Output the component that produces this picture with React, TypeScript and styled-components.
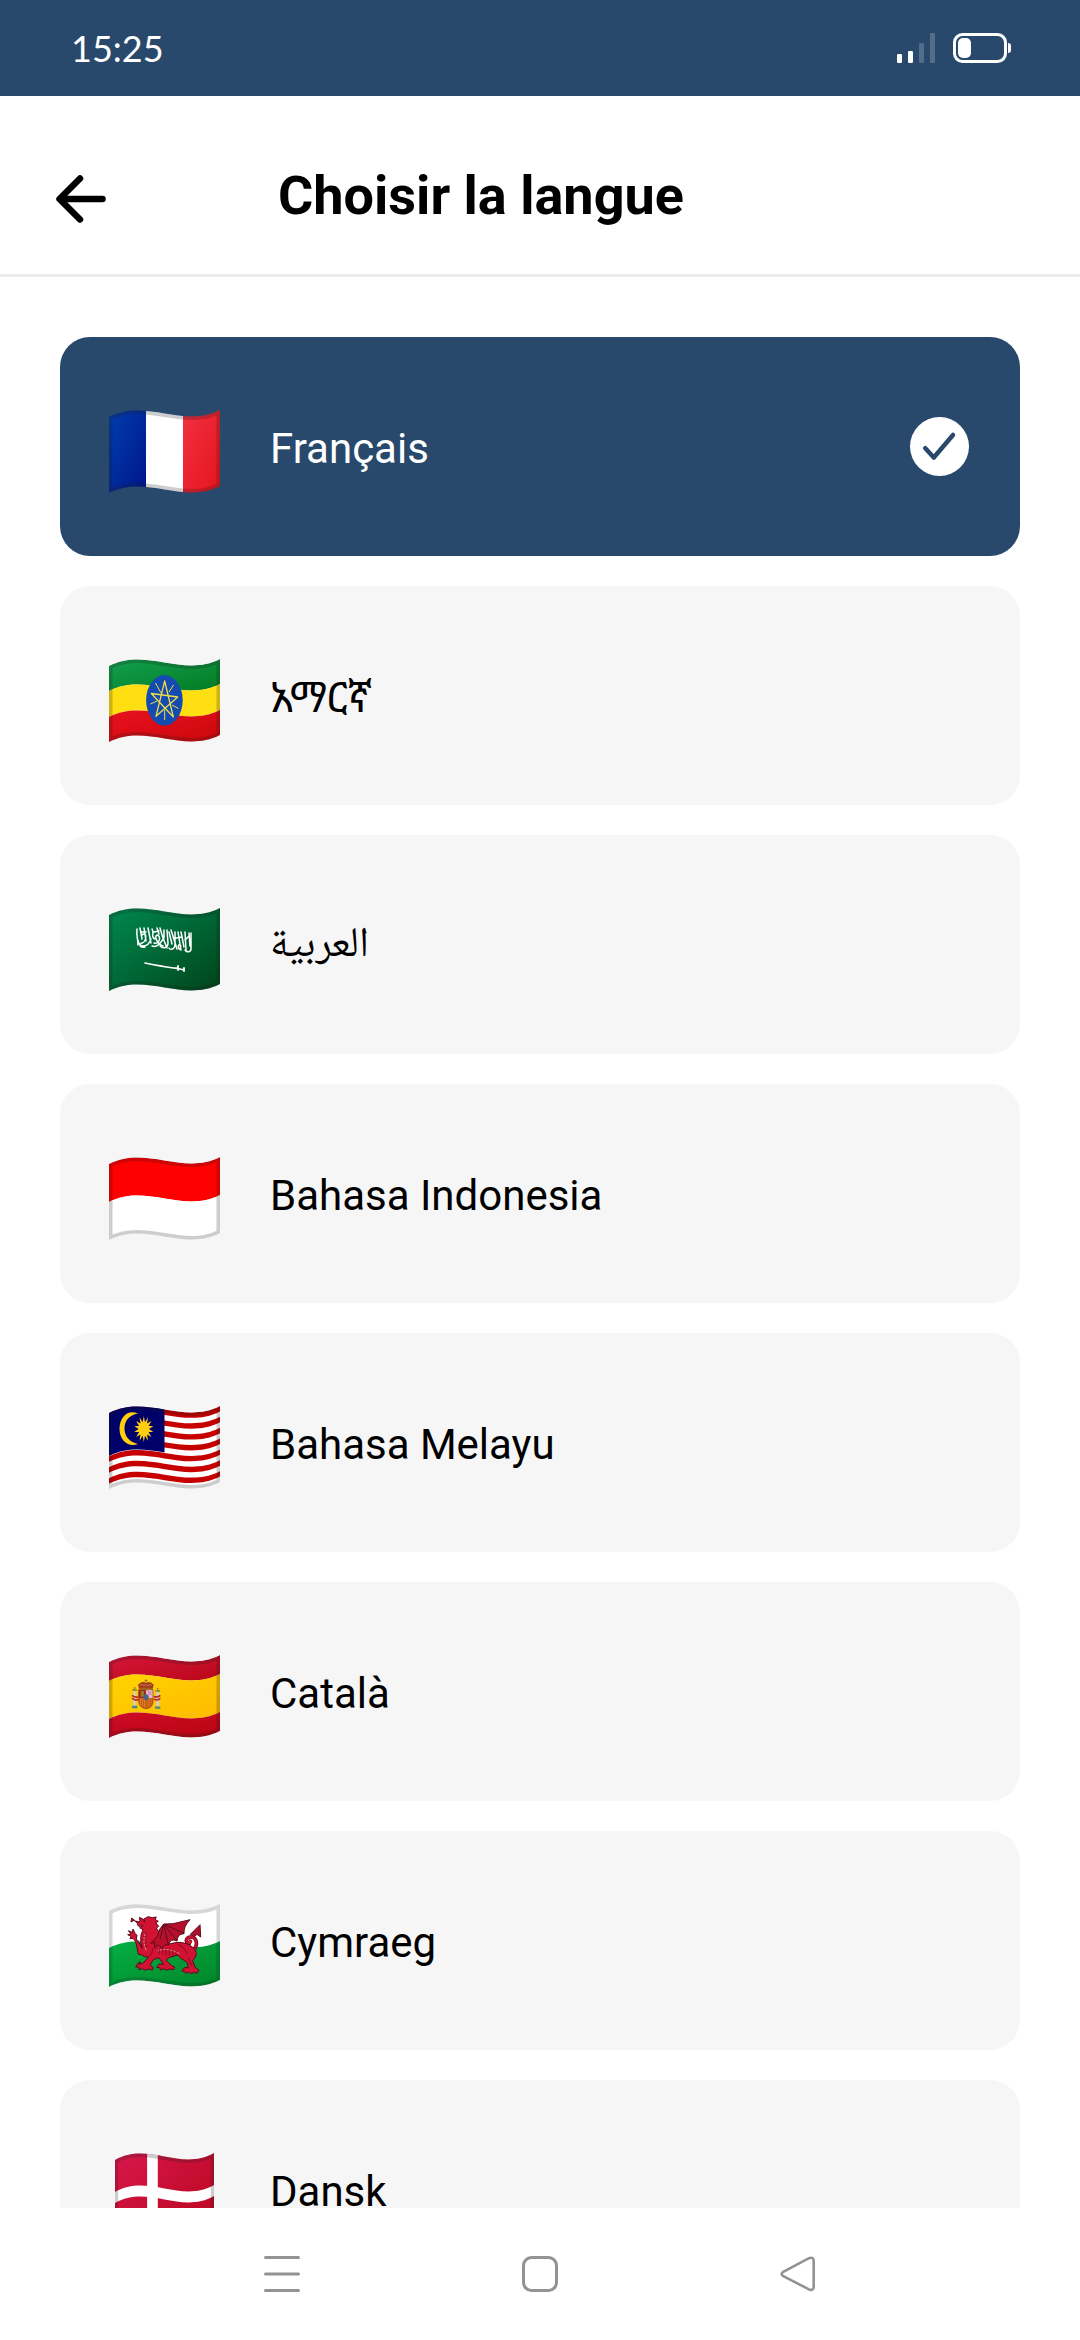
import React, { useId, useState } from 'react';
import styled, { createGlobalStyle } from 'styled-components';

const NAVY = '#28496c';

const GlobalStyle = createGlobalStyle`
  * { box-sizing: border-box; }
  body { margin: 0; background: #fff; }
  button { border: 0; background: none; padding: 0; font: inherit; color: inherit; }
  svg { display: block; }
`;

const Screen = styled.div`
  display: flex;
  flex-direction: column;
  height: 100vh;
  background: #fff;
  color: #000;
  font-family: Roboto, 'Noto Sans', 'Noto Sans Ethiopic', 'DejaVu Sans', sans-serif;
`;

const StatusBar = styled.div`
  display: flex;
  flex: none;
  align-items: center;
  justify-content: space-between;
  height: 96px;
  padding: 0 69px 0 71px;
  background: ${NAVY};
  color: #fff;
`;

const Clock = styled.time`
  font-family: Lato, sans-serif;
  font-size: 36px;
  line-height: 44px;
`;

const StatusIcons = styled.div`
  display: flex;
  align-items: center;
  gap: 18px;
`;

const Header = styled.header`
  display: flex;
  flex: none;
  align-items: center;
  gap: 172px;
  padding: 67px 56px 45px;
  border-bottom: 3px solid #ebebeb;
`;

const BackButton = styled.button`
  padding-top: 6px;
`;

const Title = styled.h1`
  margin: 0;
  font-size: 54px;
  font-weight: 700;
  line-height: 66px;
`;

const LanguageList = styled.ul`
  display: flex;
  flex: 1;
  flex-direction: column;
  gap: 30px;
  min-height: 0;
  margin: 0;
  padding: 60px 60px 0;
  list-style: none;
  overflow-y: auto;
  scrollbar-width: none;
`;

const LanguageCard = styled.button<{ $selected: boolean }>`
  display: flex;
  align-items: center;
  width: 100%;
  padding: 73px 51px 63px 49px;
  border-radius: 30px;
  background: ${({ $selected }) => ($selected ? NAVY : '#f6f6f6')};
  color: ${({ $selected }) => ($selected ? '#fff' : '#000')};
  text-align: left;
`;

const LanguageName = styled.span<{ $naskh: boolean }>`
  flex: 1;
  margin-left: 50px;
  padding-bottom: 6px;
  font-family: ${({ $naskh }) => ($naskh ? "'Noto Naskh Arabic', 'DejaVu Sans', sans-serif" : 'inherit')};
  font-size: 42px;
  line-height: 50px;
`;

const CheckMark = styled.span`
  padding-bottom: 10px;
`;

const NavBar = styled.nav`
  display: grid;
  flex: none;
  grid-template-columns: repeat(3, 1fr);
  height: 132px;
  padding: 0 153px;
  background: #fff;
`;

const NavButton = styled.button`
  display: flex;
  align-items: center;
  justify-content: center;
`;

type FlagProps = { tint?: number; width?: number; children: React.ReactNode };

const band = (y: number, h: number) =>
  `M0 ${y + 7} C37 ${y - 12} 74 ${y + 19} 111 ${y} V${y + h} C74 ${y + h + 19} 37 ${y + h - 12} 0 ${y + h + 7} Z`;
const halfBand = (y: number, h: number) =>
  `M0 ${y + 7} C18.5 ${y - 2.5} 37 ${y + 0.5} 55.5 ${y + 3.5} V${y + h + 3.5} C37 ${y + h + 0.5} 18.5 ${y + h - 2.5} 0 ${y + h + 7} Z`;

function Flag({ tint = 0.22, width = 111, children }: FlagProps) {
  const id = useId().replace(/[^a-zA-Z0-9]/g, '');
  return (
    <svg width="111" height="83" viewBox="0 0 111 83" aria-hidden="true">
      <defs>
        <clipPath id={`c${id}`}>
          <path d={band(0, 76)} />
        </clipPath>
      </defs>
      <g transform={width === 111 ? undefined : `translate(${(111 - width) / 2} 0) scale(${width / 111} 1)`}>
        <g clipPath={`url(#c${id})`}>
          {children}
          <path d={band(0, 76)} fill="none" stroke="#1a1a1a" strokeOpacity={tint} strokeWidth="7" />
        </g>
      </g>
    </svg>
  );
}

function Shade({ from, to, d }: { from: string; to: string; d: string }) {
  const id = useId().replace(/[^a-zA-Z0-9]/g, '');
  return (
    <>
      <linearGradient id={id} x1="0" y1="0" x2="1" y2="1">
        <stop offset="0" stopColor={from} />
        <stop offset="1" stopColor={to} />
      </linearGradient>
      <path d={d} fill={`url(#${id})`} />
    </>
  );
}

const France = () => (
  <Flag>
    <Shade from="#003fb0" to="#001489" d="M0 -2H37V85H0Z" />
    <path d="M37 -2H74V85H37Z" fill="#fff" />
    <Shade from="#f23142" to="#e5131d" d="M74 -2H111V85H74Z" />
  </Flag>
);

const Ethiopia = () => (
  <Flag>
    <Shade from="#12a150" to="#047a22" d={band(0, 25)} />
    <path d={band(25, 26)} fill="#ffde12" />
    <Shade from="#e8111e" to="#cb070c" d={band(51, 26)} />
    <ellipse cx="55.4" cy="41.3" rx="18.3" ry="25.3" fill="#134bb0" />
    <g fill="none" stroke="#f0dd4a" strokeWidth="1.3" strokeLinejoin="round">
      <path d="M55.7 22 L64.3 58 L42.3 34.5 L68.7 38 L47 57.3 Z" />
      <path d="M46.5 24 L52 34 M64.5 26 L60 33 M41.5 45 L48 42 M69.5 49.5 L63 46 M55.7 61 V51" strokeWidth="1" />
    </g>
  </Flag>
);

const SaudiArabia = () => (
  <Flag>
    <Shade from="#008a50" to="#00431a" d="M0 -2H111V85H0Z" />
    <g fill="none" stroke="#fff" strokeLinecap="round" strokeLinejoin="round">
      <path
        strokeWidth="1.5"
        d="M28 21 C27 27 29 31 29 37 M31 20 L33 31 M35 20 L37 33 M29 32 C30 40 39 40 42 31 M33 27 C38 22 38 34 33 35 C30 36 30 40 36 39 M39 20 L42 35 M43 21 C46 25 41 29 46 31 M45 35 C50 37 53 28 48 27 C45 28 48 36 54 38 M43 38 C49 40 52 34 55 30 M48 20 L50 26 M51 20 L54 30 L58 40 M55 22 V29 M58 22 L59 35 C59 40 54 41 51 38 M60 24 L63 36 M62 22 L68 41 M66 24 L66 36 C66 42 61 42 60 40 M69 24 L72 42 M72 24 L75 39 M76 24 L77 42 M80 25 L81 38 M82 25 V41 C82 44 78 45 76 42 M72 38 C69 34 68 41 72 42 M32 24 H37 M45 24 L50 23 M67 30 L73 29 M76 32 L80 28"
      />
      <path d="M36 55 Q50 58 68 60.5" strokeWidth="1.6" />
      <path d="M67 60 L75 62 M69 58 V62 M75 60 V63" strokeWidth="1.8" />
    </g>
  </Flag>
);

const Indonesia = () => (
  <Flag>
    <path d={band(0, 38)} fill="#fe0000" />
    <path d={band(38, 38)} fill="#fff" />
  </Flag>
);

const sunRays = Array.from({ length: 28 }, (_, i) => {
  const r = i % 2 === 0 ? 13 : 7;
  const a = (i * Math.PI) / 14 - Math.PI / 2;
  return `${(34.8 + r * 0.75 * Math.cos(a)).toFixed(2)},${(23 + r * Math.sin(a)).toFixed(2)}`;
}).join(' ');

const Malaysia = () => (
  <Flag>
    <path d={band(0, 76)} fill="#fff" />
    {[0, 1, 2, 3, 4, 5, 6].map((i) => (
      <path key={i} d={band(i * 10.86, 5.43)} fill="#c60000" />
    ))}
    <path d={halfBand(-2, 45)} fill="#00006b" />
    <path d="M29 7.5 C18 3 10.5 12 10.5 23 C10.5 34 19 42 29 38 C20 36 15.5 30 15.5 22.5 C15.5 15 20 9 29 7.5 Z" fill="#ffcf0d" />
    <polygon points={sunRays} fill="#ffcf0d" />
  </Flag>
);

const Catalonia = () => (
  <Flag>
    <Shade from="#d7163a" to="#b80718" d={band(0, 19)} />
    <Shade from="#ffd400" to="#ffba00" d={band(19, 38)} />
    <Shade from="#cf0a28" to="#b80510" d={band(57, 19)} />
    <g transform="translate(-19.3 -25.7) scale(.3333)">
      <path d="M147 181 H190 V218 Q188 237 169 238 Q149 236 147 218 Z" fill="#b96a15" />
      <path d="M147 181 H168 V206 H147 Z" fill="#a3222b" />
      <path d="M169 181 H190 V206 H169 Z" fill="#e7b5ca" />
      <path d="M147 207 H168 V235 Q148 233 147 207 Z" fill="#c9501f" />
      <path d="M152 207 V230 M158 207 V234 M164 207 V236" stroke="#ecaa16" strokeWidth="2" />
      <path d="M170 208 H190 Q190 232 170 236 Z" fill="#cf6816" />
      <path d="M153 185 H163 V202 H153 Z" fill="#9a7a24" />
      <path d="M147 181 H190 V218 Q188 237 169 238 Q149 236 147 218 Z" fill="none" stroke="#8c3a1c" strokeWidth="2" />
      <ellipse cx="169" cy="204" rx="8" ry="9" fill="#496386" />
      <path d="M174 185 L186 198 M184 186 L175 199" stroke="#b682a5" strokeWidth="3" />
      <path d="M148 178 L145 166 Q156 154 169 161 Q182 154 192 166 L189 178 Z" fill="#a03a22" />
      <path d="M150 168 Q158 163 164 169 Q169 162 174 169 Q182 163 187 168" fill="none" stroke="#e2a92a" strokeWidth="2" />
      <path d="M169 150 V160 M165 154 H173 M149 177 H189" stroke="#9c6320" strokeWidth="3" />
      <path d="M130 187 H140 V230 H130 Z M199 187 H209 V230 H199 Z" fill="#d6cdb2" />
      <path d="M128 182 H142 M197 185 H211" stroke="#7c8342" strokeWidth="5" />
      <path d="M135 173 V180 M204 176 V182" stroke="#b6842c" strokeWidth="5" />
      <path d="M127 233 H143 M196 235 H212" stroke="#4e8a83" strokeWidth="7" />
      <path d="M127 198 Q134 205 146 203 M127 206 Q136 216 146 210 M212 198 Q205 205 192 202 M212 207 Q204 216 192 209" fill="none" stroke="#b92a2c" strokeWidth="5" />
    </g>
  </Flag>
);

const Wales = () => (
  <Flag tint={0.18}>
    <path d={band(0, 76)} fill="#fff" />
    <Shade from="#05b043" to="#00852a" d={band(37, 39)} />
    <g transform="translate(-19.3 -24.3) scale(.3333)" stroke="#5a0b1c" strokeWidth="3" strokeLinejoin="round">
      <path fill="none" strokeWidth="11" strokeLinecap="round" d="M310 212 C328 195 320 170 302 172 C286 174 287 192 299 191" />
      <path
        fill="none"
        stroke="#c8102e"
        strokeWidth="7"
        strokeLinecap="round"
        d="M310 212 C328 195 320 170 302 172 C286 174 287 192 299 191 C306 189 306 181 300 182"
      />
      <path fill="#b00f2c" d="M302 164 L331 135 L333 172 L322 164 L314 171 Z" />
      <path fill="#c8102e" d="M144 131 L133 122 L124 127 L126 115 L137 124 L147 126 Z" />
      <path
        fill="#d11233"
        d="M142 133 L151 124 L149 113 L161 119 L175 111 L188 114 L200 112 L196 119 L206 125 L198 129 L207 140 L200 145 L208 158 L205 172 L226 195 L262 188 Q292 187 312 205 Q325 218 316 234 L309 243 L316 262 L328 272 L322 281 L313 277 L306 282 L297 277 L288 281 L285 275 L276 274 L284 264 L296 264 L292 247 Q272 238 264 226 L236 234 L230 242 L245 257 L255 262 L252 270 L238 268 L230 272 L222 267 L212 271 L210 263 L201 264 L208 253 L222 254 L207 234 L191 240 L181 256 L191 264 L188 271 L176 268 L168 272 L159 267 L148 270 L148 262 L138 262 L144 251 L152 254 L148 246 L158 252 L176 233 Q162 232 155 225 L146 224 L138 186 L130 176 L121 177 L124 170 L114 165 L124 163 L116 153 L128 158 L130 148 L136 161 L142 167 L140 178 L158 206 Q150 188 154 165 L160 150 L150 144 L160 138 L147 140 Z"
      />
      <path fill="#b80f2d" d="M203 170 L209 150 L222 133 L250 132 L301 120 Q281 140 283 162 Q263 162 262 184 Q242 174 236 196 Q222 192 218 207 L205 195 L195 205 L194 188 L184 191 Z" />
      <path fill="none" d="M222 135 L236 194 M224 136 L262 182 M226 135 L283 161 M220 137 L212 178" />
      <path fill="none" stroke="#efb3ac" strokeWidth="2" d="M166 160 Q158 190 170 213 M204 213 Q235 202 270 222" />
      <path fill="none" strokeWidth="2" d="M162 160 L172 162 M160 170 L170 172 M159 180 L170 181 M161 190 L171 190 M164 201 L174 199 M209 208 V222 M219 206 V224 M229 206 V226 M239 207 V227 M249 209 V227 M259 213 V227" />
      <path fill="none" strokeWidth="2" d="M190 205 Q188 225 176 233 M265 195 Q285 202 292 222 M296 233 L307 260 M153 196 L145 182" />
      <circle cx="164" cy="124" r="2" fill="#5a0b1c" />
    </g>
  </Flag>
);

const Denmark = () => (
  <Flag width={99}>
    <Shade from="#d8174c" to="#b8061c" d="M0 -2H111V85H0Z" />
    <path d="M36 -2H48V85H36Z" fill="#fff" />
    <path d={band(32, 11)} fill="#fff" />
  </Flag>
);

const LANGUAGES = [
  { code: 'fr', name: 'Français', FlagArt: France },
  { code: 'am', name: 'አማርኛ', FlagArt: Ethiopia },
  { code: 'ar', name: 'العربية', FlagArt: SaudiArabia },
  { code: 'id', name: 'Bahasa Indonesia', FlagArt: Indonesia },
  { code: 'ms', name: 'Bahasa Melayu', FlagArt: Malaysia },
  { code: 'ca', name: 'Català', FlagArt: Catalonia },
  { code: 'cy', name: 'Cymraeg', FlagArt: Wales },
  { code: 'da', name: 'Dansk', FlagArt: Denmark },
];

export default function App() {
  const [selected, setSelected] = useState('fr');

  return (
    <Screen>
      <GlobalStyle />
      <StatusBar>
        <Clock>15:25</Clock>
        <StatusIcons>
          <svg width="38" height="30" viewBox="0 0 38 30" fill="#fff" aria-hidden="true">
            <rect x="0" y="21" width="5" height="9" rx="1.2" />
            <rect x="11" y="18" width="5" height="12" rx="1.2" />
            <rect x="22" y="10" width="5" height="20" rx="1.2" opacity=".2" />
            <rect x="33" y="0" width="5" height="30" rx="1.2" opacity=".2" />
          </svg>
          <svg width="58" height="30" viewBox="0 0 58 30" aria-hidden="true">
            <rect x="1.5" y="1.5" width="51" height="27" rx="8" fill="none" stroke="#fff" strokeWidth="3" />
            <rect x="5" y="5" width="13" height="20" rx="5" fill="#fff" />
            <path d="M55 10 Q58 10 58 13 V17 Q58 20 55 20 Z" fill="#fff" />
          </svg>
        </StatusIcons>
      </StatusBar>

      <Header>
        <BackButton type="button" aria-label="Retour">
          <svg width="50" height="48" viewBox="0 0 50 48" fill="none" stroke="#000" strokeWidth="6.5" strokeLinecap="round" strokeLinejoin="round">
            <path d="M24 3.5 L3.5 24 L24 44.5 M4 24 H46.5" />
          </svg>
        </BackButton>
        <Title>Choisir la langue</Title>
      </Header>

      <LanguageList>
        {LANGUAGES.map(({ code, name, FlagArt }) => (
          <li key={code}>
            <LanguageCard
              type="button"
              $selected={code === selected}
              aria-pressed={code === selected}
              onClick={() => setSelected(code)}
            >
              <FlagArt />
              <LanguageName lang={code} $naskh={code === 'ar'}>
                {name}
              </LanguageName>
              {code === selected && (
                <CheckMark>
                  <svg width="59" height="59" viewBox="0 0 59 59" aria-hidden="true">
                    <circle cx="29.5" cy="29.5" r="29.5" fill="#fff" />
                    <path d="M15.3 31.2 L23.8 40.5 L43 18" fill="none" stroke={NAVY} strokeWidth="4.5" strokeLinecap="round" strokeLinejoin="round" />
                  </svg>
                </CheckMark>
              )}
            </LanguageCard>
          </li>
        ))}
      </LanguageList>

      <NavBar aria-label="Navigation système">
        <NavButton type="button" aria-label="Applications récentes">
          <svg width="36" height="36" viewBox="0 0 36 36" stroke="#939393" strokeWidth="3" strokeLinecap="round">
            <path d="M1.5 1.5 H34.5 M1.5 18 H34.5 M1.5 34.5 H34.5" />
          </svg>
        </NavButton>
        <NavButton type="button" aria-label="Accueil">
          <svg width="36" height="36" viewBox="0 0 36 36" fill="none" stroke="#939393" strokeWidth="3">
            <rect x="1.5" y="1.5" width="33" height="33" rx="8" />
          </svg>
        </NavButton>
        <NavButton type="button" aria-label="Précédent">
          <svg width="36" height="36" viewBox="0 0 36 36" fill="none" stroke="#939393" strokeWidth="2.6" strokeLinejoin="round">
            <path d="M2.8 16.2 L29 2.2 Q33.7 0.6 33.7 5 V31 Q33.7 35 29 33.4 L2.8 19.8 Q0.6 18 2.8 16.2 Z" />
          </svg>
        </NavButton>
      </NavBar>
    </Screen>
  );
}
